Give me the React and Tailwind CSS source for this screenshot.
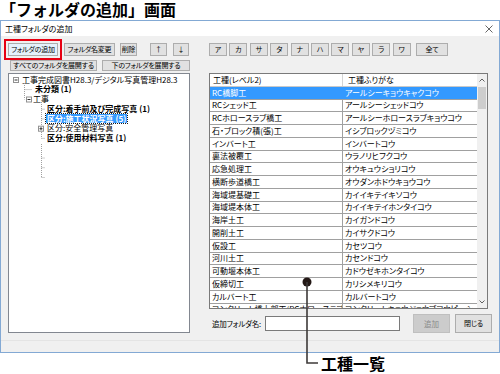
import React from 'react';

const rows = [
  ['RC橋脚工', 'アールシーキョウキャクコウ'],
  ['RCシェッド工', 'アールシーシェッドコウ'],
  ['RCホロースラブ橋工', 'アールシーホロースラブキョウコウ'],
  ['石・ブロック積(張)工', 'イシブロックヅミコウ'],
  ['インバート工', 'インバートコウ'],
  ['裏法被覆工', 'ウラノリヒフクコウ'],
  ['応急処理工', 'オウキュウショリコウ'],
  ['横断歩道橋工', 'オウダンホドウキョウコウ'],
  ['海域堤基礎工', 'カイイキテイキソコウ'],
  ['海域堤本体工', 'カイイキテイホンタイコウ'],
  ['海岸土工', 'カイガンドコウ'],
  ['開削土工', 'カイサクドコウ'],
  ['仮設工', 'カセツコウ'],
  ['河川土工', 'カセンドコウ'],
  ['可動堰本体工', 'カドウゼキホンタイコウ'],
  ['仮締切工', 'カリシメキリコウ'],
  ['カルバート工', 'カルバートコウ'],
  ['コンクリート橋上部工(PCホロースラブ', 'コンクリートキョウジョウブコウピーシー'],
];

const kana = ['ア', 'カ', 'サ', 'タ', 'ナ', 'ハ', 'マ', 'ヤ', 'ラ', 'ワ'];

const Btn = ({ className = '', children }) => (
  <button className={`flex items-center justify-center whitespace-nowrap overflow-hidden bg-[#e1e1e1] border border-[#adadad] text-[7px] tracking-[-0.2px] leading-none text-black ${className}`}>
    {children}
  </button>
);

const TreeLines = () => (
  <svg className="absolute left-0 top-0 pointer-events-none" width="180" height="120" viewBox="0 0 180 120">
    <g stroke="#a0a0a0" strokeWidth="1" fill="none" strokeDasharray="1 1">
      <path d="M15.5 9v16.4M15.5 15.6h8" />
      <path d="M32.5 28v36.4M32.5 35.2h4M32.5 44.9h4M32.5 64.4h4M34 54.7h2" />
      <path d="M32.5 70v33.5M32.5 84h4M32.5 93.7h4M32.5 103.5h4" />
    </g>
    <g stroke="#919191" strokeWidth="1" fill="#fff">
      <rect x="4.5" y="3.5" width="5" height="5" />
      <rect x="17.5" y="23" width="5" height="5" />
      <rect x="29.5" y="52.2" width="5" height="5" />
    </g>
    <g stroke="#333" strokeWidth="1">
      <path d="M5.5 6h3M18.5 25.5h3M30.5 54.7h3M32 53.2v3" />
    </g>
  </svg>
);

const TreeRow = ({ pl, bold, selected, children }) => (
  <div className={`h-[9.75px] flex items-center text-[8px] leading-none whitespace-nowrap ${pl} ${bold ? 'font-bold' : ''}`}>
    {selected ? (
      <span className="bg-[#3399ff] text-white px-[1px] h-[9px] flex items-center outline outline-1 outline-dotted outline-[#1a1a1a]">{children}</span>
    ) : (
      children
    )}
  </div>
);

export default function App() {
  return (
    <div className="relative w-[500px] h-[374px] bg-white overflow-hidden font-['Noto_Sans_CJK_JP',sans-serif] text-black">
      <div className="h-[20px] text-[16px] font-bold leading-[18px] whitespace-nowrap">「フォルダの追加」画面</div>

      <div className="w-[500px] h-[333px] border border-[#83a9d4] flex flex-col bg-[#f0f0f0] [font-feature-settings:'palt']">
        <div className="h-[15px] bg-white flex items-center justify-between pl-[4px] pr-[6px] shrink-0">
          <span className="text-[8px] leading-none">工種フォルダの追加</span>
          <svg width="8" height="8" viewBox="0 0 8 8">
            <path d="M0.5 0.5l7 7M7.5 0.5l-7 7" stroke="#555" strokeWidth="0.9" />
          </svg>
        </div>

        <div className="flex pt-[7px] pl-[7px] h-[297px]">
          {/* left column */}
          <div className="w-[182px] flex flex-col">
            <div className="flex h-[13px] items-stretch">
              <Btn className="w-[50px] bg-[#e5f1fb] border-[#0078d7] outline-2 outline-[#e60012] outline-offset-[2px]">フォルダの追加</Btn>
              <Btn className="w-[51px] ml-[6px]">フォルダ名変更</Btn>
              <Btn className="w-[17px] ml-[5px]">削除</Btn>
              <Btn className="w-[17px] ml-[13px]">↑</Btn>
              <Btn className="w-[16px] ml-[6px]">↓</Btn>
            </div>
            <div className="flex h-[11px] mt-[4px] ml-[2px]">
              <Btn className="w-[87px]">すべてのフォルダを展開する</Btn>
              <Btn className="w-[88px] ml-[5px]">下のフォルダを展開する</Btn>
            </div>
            <div className="relative mt-[2px] h-[263px] bg-white border border-[#828790] pt-[1px]">
              <TreeLines />
              <TreeRow pl="pl-[13px]">工事完成図書H28.3/デジタル写真管理H28.3</TreeRow>
              <TreeRow pl="pl-[26px]" bold>未分類 (1)</TreeRow>
              <TreeRow pl="pl-[24px]">工事</TreeRow>
              <TreeRow pl="pl-[38px]" bold>区分:着手前及び完成写真 (1)</TreeRow>
              <TreeRow pl="pl-[37px]" bold selected>区分:施工状況写真 (5)</TreeRow>
              <TreeRow pl="pl-[38px]">区分:安全管理写真</TreeRow>
              <TreeRow pl="pl-[38px]" bold>区分:使用材料写真 (1)</TreeRow>
            </div>
          </div>

          {/* right column */}
          <div className="w-[283px] ml-[19px] flex flex-col">
            <div className="flex h-[13px] gap-[2.4px]">
              {kana.map((k) => (
                <Btn key={k} className="w-[18px]">{k}</Btn>
              ))}
              <Btn className="w-[32px] ml-[3px]">全て</Btn>
            </div>
            <div className="mt-[17px] w-[279px] h-[239px] border border-[#7a7a7a] bg-white flex overflow-hidden">
              <div className="flex-1 flex flex-col overflow-hidden">
                <div className="h-[13px] shrink-0 flex border-b border-[#c9c9c9] text-[8px] leading-none">
                  <div className="w-[133px] border-r border-[#d5d5d5] flex items-center pl-[3px]">工種(レベル2)</div>
                  <div className="flex-1 flex items-center pl-[5px]">工種ふりがな</div>
                </div>
                {rows.map(([a, b], i) => (
                  <div
                    key={a}
                    className={`h-[12.75px] shrink-0 flex border-b border-[#a0a0a0] text-[8px] leading-none whitespace-nowrap overflow-hidden ${i === 0 ? 'bg-[#3399ff] text-white' : ''}`}
                  >
                    <div className={`w-[133px] shrink-0 flex items-center pl-[2px] overflow-hidden ${i === 0 ? '' : 'border-r border-[#a0a0a0]'}`}>{a}</div>
                    <div className="flex-1 flex items-center pl-[2px] overflow-hidden">{b}</div>
                  </div>
                ))}
              </div>
              <div className="w-[10px] shrink-0 bg-[#f0f0f0] flex flex-col">
                <div className="h-[13px] flex items-center justify-center">
                  <svg width="6" height="4" viewBox="0 0 6 4"><path d="M0.5 3.5L3 1l2.5 2.5" stroke="#606060" fill="none" /></svg>
                </div>
                <div className="h-[22px] mx-[1px] bg-[#cdcdcd]" />
                <div className="flex-1" />
                <div className="h-[12px] flex items-center justify-center">
                  <svg width="6" height="4" viewBox="0 0 6 4"><path d="M0.5 0.5L3 3l2.5-2.5" stroke="#606060" fill="none" /></svg>
                </div>
              </div>
            </div>
            <div className="mt-[5px] h-[19px] flex items-center">
              <span className="text-[7.5px] leading-none ml-[3px] w-[53px] whitespace-nowrap tracking-[-0.2px]">追加フォルダ名:</span>
              <div className="w-[135px] h-[15px] bg-white border border-[#7a7a7a]" />
              <button className="ml-[13px] w-[37px] h-[19px] bg-[#cccccc] border border-[#bfbfbf] text-[7.5px] leading-none text-[#8a8a8a]">追加</button>
              <Btn className="ml-[5px] w-[37px] h-[19px] text-[7.5px]">閉じる</Btn>
            </div>
          </div>
        </div>

        <div className="mt-auto h-[12px] border-t border-[#e4e4e4]" />
      </div>

      {/* annotation */}
      <svg className="absolute left-0 top-0 pointer-events-none" width="500" height="374" viewBox="0 0 500 374">
        <circle cx="307" cy="282" r="4.5" fill="#231815" />
        <path d="M307 282V363H318" stroke="#3e3a39" strokeWidth="1.6" fill="none" />
      </svg>
      <span className="absolute left-[321px] top-[354px] text-[16px] font-bold leading-[18px]">工種一覧</span>
    </div>
  );
}
